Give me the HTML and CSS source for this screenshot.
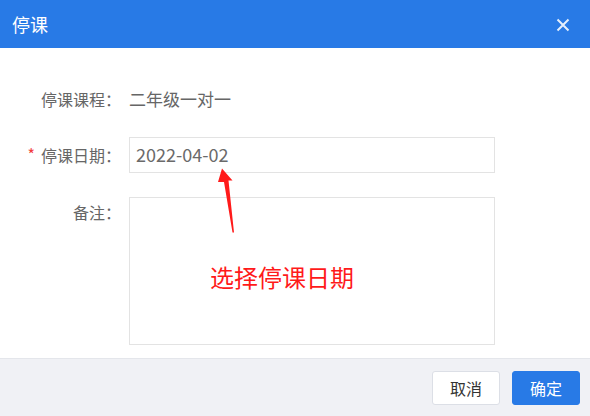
FILE: index.html
```html
<!DOCTYPE html>
<html>
<head>
    <meta charset="utf-8">
    <link rel="stylesheet" href="styles.css">
</head>
<body>
    <div id="dialog">
        <div class="dialog-header">
            <span class="dialog-title">停课</span>
            <span class="dialog-close">
                <svg width="14" height="14" viewBox="0 0 14 14">
                    <path d="M1.5 1.5 L12.5 12.5 M12.5 1.5 L1.5 12.5" stroke="currentColor" stroke-width="2" fill="none"/>
                </svg>
            </span>
        </div>

        <div class="dialog-body">
            <div class="form-item first">
                <div class="form-label">停课课程：</div>
                <div class="form-value">二年级一对一</div>
            </div>
            <div class="form-item second">
                <div class="form-label"><span class="required">*</span>停课日期：</div>
                <div class="form-input">2022-04-02</div>
            </div>
            <div class="form-item">
                <div class="form-label top">备注：</div>
                <div class="form-textarea"></div>
            </div>

            <!-- annotation drawn on top of the screenshot -->
            <svg class="note-arrow" width="590" height="416" viewBox="0 0 590 416">
                <polygon points="222,168.5 232.5,180.5 228.5,180.5 234,232.5 232.5,232.5 224,182 218,182" fill="#ff1a1a"/>
            </svg>
            <div class="note-text">选择停课日期</div>
        </div>

        <div class="dialog-footer">
            <button class="btn">取消</button>
            <button class="btn btn-primary">确定</button>
        </div>
    </div>
</body>
</html>
```

FILE: styles.css
```css
* {
    box-sizing: border-box;
}

body {
    margin: 0;
    font-family: "Noto Sans CJK SC", "Noto Sans", sans-serif;
    background: #fff;
}

#dialog {
    position: relative;
    width: 590px;
    height: 416px;
    display: flex;
    flex-direction: column;
}

.dialog-header {
    height: 48px;
    background: #287ae6;
    display: flex;
    align-items: center;
    justify-content: space-between;
    padding: 0 20px 0 12px;
}

.dialog-title {
    color: #fff;
    font-size: 18px;
    line-height: 24px;
}

.dialog-close {
    color: rgba(255, 255, 255, 0.88);
    display: flex;
    margin-top: 1px;
}

.dialog-body {
    flex: 1;
    padding-top: 33px;
}

.form-item {
    display: flex;
    align-items: flex-start;
    gap: 8px;
    font-size: 16px;
    color: #666;
}

.form-item.first {
    margin-bottom: 20px;
}

.form-item.second {
    margin-bottom: 24px;
}

.form-label {
    width: 121px;
    text-align: right;
    line-height: 36px;
    color: #666;
}

.form-label.top {
    line-height: 30px;
}

.required {
    color: #f23c3c;
    font-size: 16px;
    margin-right: 6px;
    vertical-align: top;
    line-height: 34px;
}

.form-value {
    font-size: 17px;
    line-height: 36px;
}

.form-input {
    width: 366px;
    height: 36px;
    border: 1px solid #e3e3e3;
    padding: 0 6px;
    font-size: 18px;
    line-height: 33px;
    color: #6a6a6a;
}

.form-textarea {
    width: 366px;
    height: 148px;
    border: 1px solid #e3e3e3;
}

.note-arrow {
    position: absolute;
    left: 0;
    top: 0;
    pointer-events: none;
}

.note-text {
    position: absolute;
    left: 210px;
    top: 260px;
    font-size: 24px;
    line-height: 34px;
    color: #ff1a1a;
}

.dialog-footer {
    height: 58px;
    background: #f0f1f5;
    border-top: 1px solid #e4e6eb;
    display: flex;
    justify-content: flex-end;
    align-items: flex-start;
    gap: 12px;
    padding: 12px 10px 0 0;
}

.btn {
    width: 68px;
    height: 34px;
    font-family: inherit;
    font-size: 16px;
    background: #fff;
    color: #333;
    border: 1px solid #dcdfe6;
    border-radius: 3px;
    padding: 0;
}

.btn-primary {
    background: #287ae6;
    border-color: #287ae6;
    color: #fff;
}
```
